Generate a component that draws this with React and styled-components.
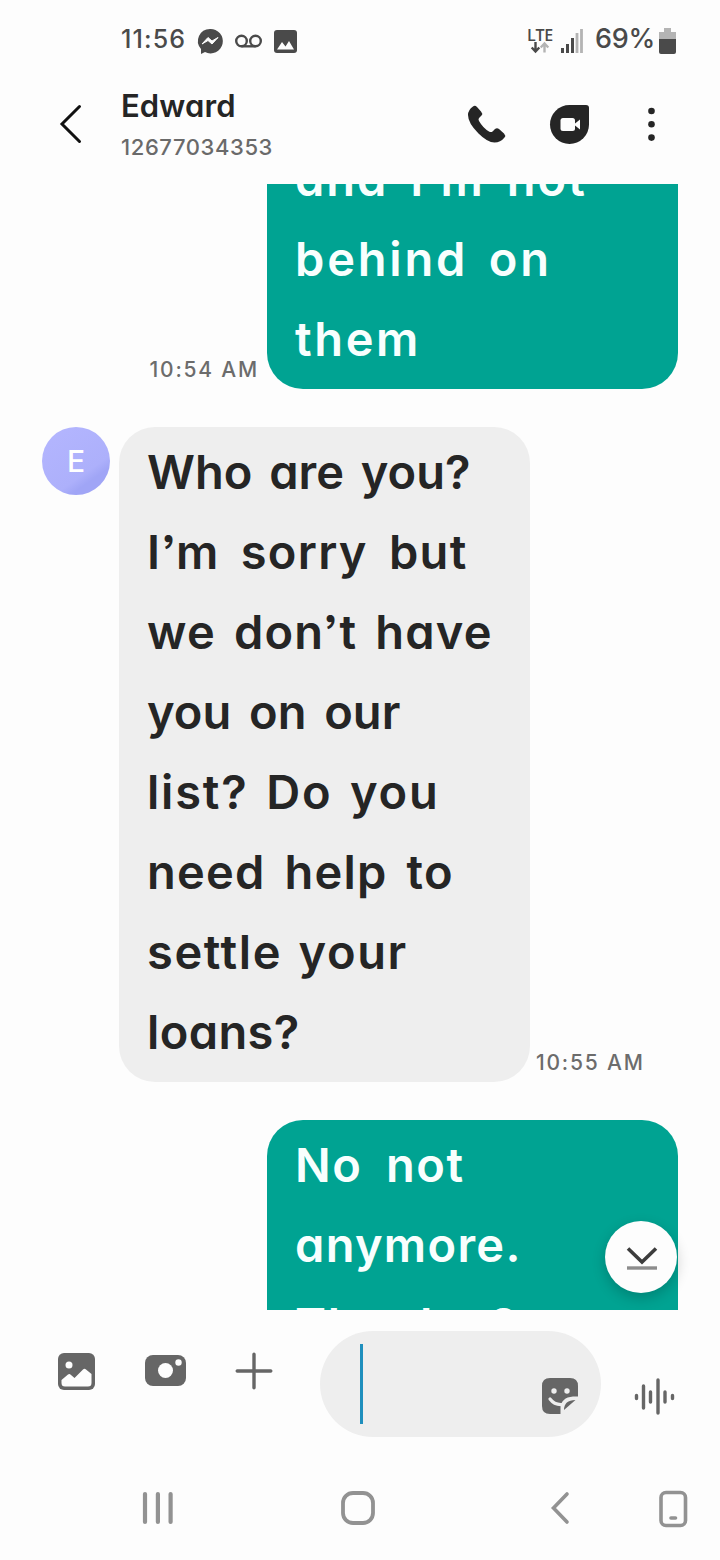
import React from "react";
import styled, { createGlobalStyle } from "styled-components";

const GlobalStyle = createGlobalStyle`
  * { box-sizing: border-box; }

  body {
    margin: 0;
    background: #fdfdfd;
    font-family: Inter, "Noto Sans", sans-serif;
    font-feature-settings: "cv11", "ss03";
    color: #252525;
  }

  svg { display: block; flex: none; overflow: visible; }
`;

const Screen = styled.div`
  display: flex;
  flex-direction: column;
  width: 720px;
  height: 1560px;
  overflow: hidden;
  background: #fdfdfd;
`;

const StatusBar = styled.div`
  display: flex;
  align-items: center;
  justify-content: space-between;
  height: 82px;
  padding: 0 44px 0 121px;
  color: #4a4a4a;
`;

const StatusGroup = styled.div`
  display: flex;
  align-items: center;
  gap: 12px;
`;

const StatusText = styled.span`
  width: ${p => p.$width}px;
  margin-top: -4px;
  font-size: ${p => p.$size}px;
  font-weight: 500;
  line-height: 30px;
  letter-spacing: ${p => p.$spacing}px;
  white-space: nowrap;
`;

const NetworkBox = styled.div`
  display: flex;
  gap: 8px;
`;

const NetworkType = styled.div`
  display: flex;
  flex-direction: column;
  align-items: center;
  width: 26px;
  font-family: "Open Sans", "Noto Sans", sans-serif;
  font-size: 16px;
  font-weight: 600;
  line-height: 14px;
  letter-spacing: -0.2px;
`;

const Header = styled.header`
  display: flex;
  align-items: center;
  height: 102px;
  padding: 0 64px 18px 58px;
`;

const Contact = styled.div`
  display: flex;
  flex-direction: column;
  flex: 1;
  margin-left: 38px;
`;

const Name = styled.div`
  font-size: 31px;
  font-weight: 600;
  line-height: 46px;
  letter-spacing: 0.1px;
`;

const Phone = styled.div`
  font-size: 22px;
  font-weight: 500;
  line-height: 36px;
  letter-spacing: 0.6px;
  color: #6a6a6a;
`;

const HeaderActions = styled.div`
  display: grid;
  grid-template-columns: 82px 98px 8px;
  align-items: center;
`;

const Conversation = styled.main`
  position: relative;
  height: 1126px;
  overflow: hidden;
`;

const Messages = styled.div`
  display: flex;
  flex-direction: column;
  gap: 38px;
  margin-top: -50px;
  padding: 0 42px;
`;

const Row = styled.div`
  display: flex;
  align-items: flex-end;
  justify-content: ${p => (p.$sent ? "flex-end" : "flex-start")};
`;

const Bubble = styled.div`
  width: 411px;
  padding: 5px 0 10px 28px;
  border-radius: 36px;
  font-size: 47px;
  font-weight: 600;
  line-height: 80px;
  background: ${p => (p.$sent ? "#00a392" : "#eeeeee")};
  color: ${p => (p.$sent ? "#f8fffe" : "#252525")};
`;

const Line = styled.div`
  height: 80px;
  letter-spacing: ${p => p.$letter}px;
  word-spacing: ${p => p.$word}px;
  white-space: nowrap;
`;

const Time = styled.time`
  margin: ${p => (p.$sent ? "0 8px 4px 0" : "0 0 4px 6px")};
  font-size: 21px;
  font-weight: 500;
  line-height: 30px;
  letter-spacing: 1.8px;
  color: #6c6c6c;
`;

const Avatar = styled.div`
  display: flex;
  align-items: center;
  justify-content: center;
  align-self: flex-start;
  width: 68px;
  height: 68px;
  margin-right: 9px;
  border-radius: 50%;
  background: linear-gradient(145deg, #b4b6ff 0%, #adb0fb 66%, #a0a5f6 76%);
  color: #fff;
  font-size: 30px;
  font-weight: 500;
`;

const JumpButton = styled.button`
  position: absolute;
  right: 43px;
  bottom: 17px;
  display: flex;
  align-items: center;
  justify-content: center;
  width: 72px;
  height: 72px;
  padding: 2px 0 0 2px;
  border: 0;
  border-radius: 50%;
  background: #fdfdfd;
  box-shadow: 0 5px 14px rgba(0, 0, 0, 0.2);
`;

const Composer = styled.div`
  display: flex;
  align-items: flex-start;
  height: 146px;
  padding: 21px 45px 0 57px;
`;

const Tools = styled.div`
  display: flex;
  align-items: center;
  gap: 49.5px;
  width: 263px;
  height: 80px;
`;

const Input = styled.div`
  display: flex;
  align-items: flex-start;
  justify-content: space-between;
  width: 281px;
  height: 106px;
  padding: 13px 22px 0 40px;
  border-radius: 53px;
  background: #eeeeee;
`;

const Caret = styled.div`
  width: 3px;
  height: 80px;
  background: #1f8fbd;
`;

const StickerSlot = styled.div`
  padding-top: 33px;
`;

const VoiceSlot = styled.div`
  padding: 46px 0 0 33px;
`;

const NavBar = styled.nav`
  display: grid;
  grid-template-columns: 316px 84px 239px 81px;
  align-items: center;
  height: 104px;
`;

const NavItem = styled.div`
  padding-left: ${p => p.$inset}px;
`;

const Messenger = () => (
  <svg width="26" height="27" viewBox="0 0 26 27">
    <path d="M13 1a12 12 0 0 0-9 20v5l4-2a12.200 12.200 0 1 0 5-23z" fill="#4a4a4a" />
    <path d="m5 16 6-6.500 4 3.500 6-3.500-6 6.500-4-3.500z" fill="#fdfdfd" stroke="#fdfdfd" strokeLinejoin="round" />
  </svg>
);

const Voicemail = () => (
  <svg width="27" height="14" viewBox="0 0 27 14" fill="none" stroke="#4a4a4a" strokeWidth="2.400">
    <circle cx="6.500" cy="7" r="5.300" />
    <circle cx="20.500" cy="7" r="5.300" />
    <path d="M6.500 12.300h14" />
  </svg>
);

const StatusPicture = () => (
  <svg width="23" height="23" viewBox="0 0 23 23">
    <rect width="23" height="23" rx="3" fill="#4a4a4a" />
    <path d="M3 19.500 8 12l3.500 4.500L15 11l5 8.500z" fill="#fdfdfd" />
  </svg>
);

const DataArrows = () => (
  <svg width="18" height="12" viewBox="0 0 18 12" fill="none" strokeWidth="2.400">
    <path d="M4.500 0v9M.700 5.500l3.800 4 3.800-4" stroke="#4a4a4a" />
    <path d="M13.500 10.500V1.500M9.700 5.500l3.800-4 3.800 4" stroke="#b4b4b4" />
  </svg>
);

const Signal = () => (
  <svg width="22" height="26" viewBox="0 0 22 26">
    <path d="M1.500 25v-5M6.500 25v-9M11.500 25V10" stroke="#4a4a4a" strokeWidth="3" />
    <path d="M16 25V5M20.500 25V1" stroke="#b4b4b4" strokeWidth="2.800" />
  </svg>
);

const Battery = () => (
  <svg width="17" height="26" viewBox="0 0 17 26">
    <path d="M5 0h7v4h5v8H0V4h5z" fill="#b4b4b4" />
    <path d="M0 11h17v13q0 2-2 2H2q-2 0-2-2z" fill="#4a4a4a" />
  </svg>
);

const Back = () => (
  <svg width="25" height="42" viewBox="0 0 25 42">
    <path d="M21.500 3.500 4 21l17.500 17.500" fill="none" stroke="#111" strokeWidth="3" strokeLinecap="round" />
  </svg>
);

const Call = () => (
  <svg width="38" height="38" viewBox="0 0 38 38">
    <path
      d="M5 1.500q2-1.500 4 .5l4 4.500q2 2 .5 4L11 13q-1 1.500 0 3 4 7 10 10.500 2 1 3.500 0l2.500-2.500q2-1.500 4 0l5 4.500q2 2 .5 4-4 5-10 5-7 0-16-9Q0 18 0 10q0-5 5-8.500z"
      fill="#252525"
    />
  </svg>
);

const VideoCall = () => (
  <svg width="39" height="39" viewBox="0 0 39 39">
    <path d="M19.500 0H36q3 0 3 3v16.500A19.500 19.500 0 1 1 19.500 0z" fill="#252525" />
    <rect x="10.500" y="13" width="14.500" height="13" rx="2.500" fill="#fdfdfd" />
    <path d="M25 18.500l5-4v10l-5-4z" fill="#fdfdfd" />
  </svg>
);

const More = () => (
  <svg width="8" height="34" viewBox="0 0 8 34" fill="#252525">
    <circle cx="3.500" cy="4" r="3.300" />
    <circle cx="3.500" cy="17.300" r="3.300" />
    <circle cx="3.500" cy="30.600" r="3.300" />
  </svg>
);

const JumpArrow = () => (
  <svg width="32" height="26" viewBox="0 0 32 26" fill="none">
    <path d="M2 3.500l14 13.500L30 3.500" stroke="#3c3c3c" strokeWidth="3.600" />
    <path d="M1 23h30" stroke="#8c8c8c" strokeWidth="3.400" />
  </svg>
);

const Gallery = () => (
  <svg width="38" height="38" viewBox="0 0 38 38">
    <rect x="1" y="1" width="37" height="37" rx="6" fill="#666" />
    <circle cx="12" cy="13" r="3.500" fill="#fdfdfd" />
    <path d="M4.500 28l6.500-5.500q1.500-1 3 .5l3.500 3 8.500-8.500q1.500-1.500 3 0l5.500 4.500v9q0 3.500-3.500 3.500h-23q-3.500 0-3.500-3.500z" fill="#fdfdfd" />
  </svg>
);

const Camera = () => (
  <svg width="41" height="32" viewBox="0 0 41 32">
    <rect width="41" height="31" rx="8" fill="#666" />
    <circle cx="20.500" cy="15.500" r="7.500" fill="#fdfdfd" />
    <circle cx="33.500" cy="7.500" r="3.200" fill="#fdfdfd" />
  </svg>
);

const Plus = () => (
  <svg width="38" height="38" viewBox="0 0 38 38">
    <path d="M19 2.200v33.600M2.200 19h33.600" stroke="#666" strokeWidth="3.400" strokeLinecap="round" />
  </svg>
);

const Sticker = () => (
  <svg width="38" height="38" viewBox="0 0 38 38" fill="none">
    <path d="M9 1h20q8 0 8 8v10.500h-5Q20 20.500 19.500 31v6H9q-8 0-8-8V9q0-8 8-8z" fill="#666" />
    <path d="M23 33q0-10 11.500-10z" fill="#666" />
    <circle cx="13" cy="14" r="2.700" fill="#eee" />
    <circle cx="26" cy="14" r="2.700" fill="#eee" />
    <path d="M9 22q4.500 6 12 5.500" stroke="#eee" strokeWidth="3.200" strokeLinecap="round" />
  </svg>
);

const Voice = () => (
  <svg width="40" height="40" viewBox="0 0 40 40">
    <path
      d="M2.500 18.500v3M9.500 9v22M16.500 15v10M24 3v33M31 15v10M38.500 18.500v3"
      stroke="#666"
      strokeWidth="3.400"
      strokeLinecap="round"
    />
  </svg>
);

const Recents = () => (
  <svg width="34" height="34" viewBox="0 0 34 34">
    <path d="M3 3v28M15.900 3v28M28.600 3v28" stroke="#929292" strokeWidth="4.200" strokeLinecap="round" />
  </svg>
);

const Home = () => (
  <svg width="34" height="34" viewBox="0 0 34 34">
    <rect x="2" y="2" width="30" height="30" rx="10" fill="none" stroke="#929292" strokeWidth="3.800" />
  </svg>
);

const NavBack = () => (
  <svg width="20" height="34" viewBox="0 0 20 34">
    <path d="M17 3 3.500 17 17 31" fill="none" stroke="#929292" strokeWidth="3.600" strokeLinecap="round" />
  </svg>
);

const Device = () => (
  <svg width="28" height="37" viewBox="0 0 28 37" fill="none" stroke="#929292" strokeWidth="3.600">
    <rect x="2" y="2.500" width="24.500" height="33" rx="5" />
    <path d="M12 28h4.500" strokeLinecap="round" />
  </svg>
);

// each line: text, letter spacing, word spacing
const messages = [
  {
    sent: true,
    time: "10:54 AM",
    lines: [["and I’m not", 2, 8], ["behind on", 2.8, 6], ["them", 2.6, 0]]
  },
  {
    sent: false,
    time: "10:55 AM",
    lines: [
      ["Who are you?", 0, 5],
      ["I’m sorry but", 1.3, 8],
      ["we don’t have", 1.2, 5],
      ["you on our", 0, 6],
      ["list? Do you", 1.8, 4],
      ["need help to", 1.2, 6],
      ["settle your", 1.6, 3],
      ["loans?", 0.4, 0]
    ]
  },
  {
    sent: true,
    lines: [["No not", 1.6, 10], ["anymore.", 1.3, 0], ["Thanks ?", 1.8, 1]]
  }
];

const Message = ({ sent, time, lines }) => (
  <Row $sent={sent}>
    {!sent && <Avatar>E</Avatar>}
    {sent && time && <Time $sent>{time}</Time>}
    <Bubble $sent={sent}>
      {lines.map(([text, letter, word]) => (
        <Line key={text} $letter={letter} $word={word}>{text}</Line>
      ))}
    </Bubble>
    {!sent && <Time>{time}</Time>}
  </Row>
);

const App = () => (
  <Screen>
    <GlobalStyle />
    <StatusBar>
      <StatusGroup>
        <StatusText $width={64} $size={25} $spacing={1.1}>11:56</StatusText>
        <Messenger />
        <Voicemail />
        <StatusPicture />
      </StatusGroup>
      <StatusGroup>
        <NetworkBox>
          <NetworkType>
            LTE
            <DataArrows />
          </NetworkType>
          <Signal />
        </NetworkBox>
        <StatusText $width={52} $size={27} $spacing={-0.2}>69%</StatusText>
        <Battery />
      </StatusGroup>
    </StatusBar>

    <Header>
      <Back />
      <Contact>
        <Name>Edward</Name>
        <Phone>12677034353</Phone>
      </Contact>
      <HeaderActions>
        <Call />
        <VideoCall />
        <More />
      </HeaderActions>
    </Header>

    <Conversation>
      <Messages>
        {messages.map((message, i) => (
          <Message key={i} {...message} />
        ))}
      </Messages>
      <JumpButton aria-label="Jump to latest">
        <JumpArrow />
      </JumpButton>
    </Conversation>

    <Composer>
      <Tools>
        <Gallery />
        <Camera />
        <Plus />
      </Tools>
      <Input>
        <Caret />
        <StickerSlot><Sticker /></StickerSlot>
      </Input>
      <VoiceSlot><Voice /></VoiceSlot>
    </Composer>

    <NavBar>
      <NavItem $inset={141.5}><Recents /></NavItem>
      <NavItem $inset={25}><Home /></NavItem>
      <NavItem $inset={150}><NavBack /></NavItem>
      <NavItem $inset={20}><Device /></NavItem>
    </NavBar>
  </Screen>
);

export default App;
